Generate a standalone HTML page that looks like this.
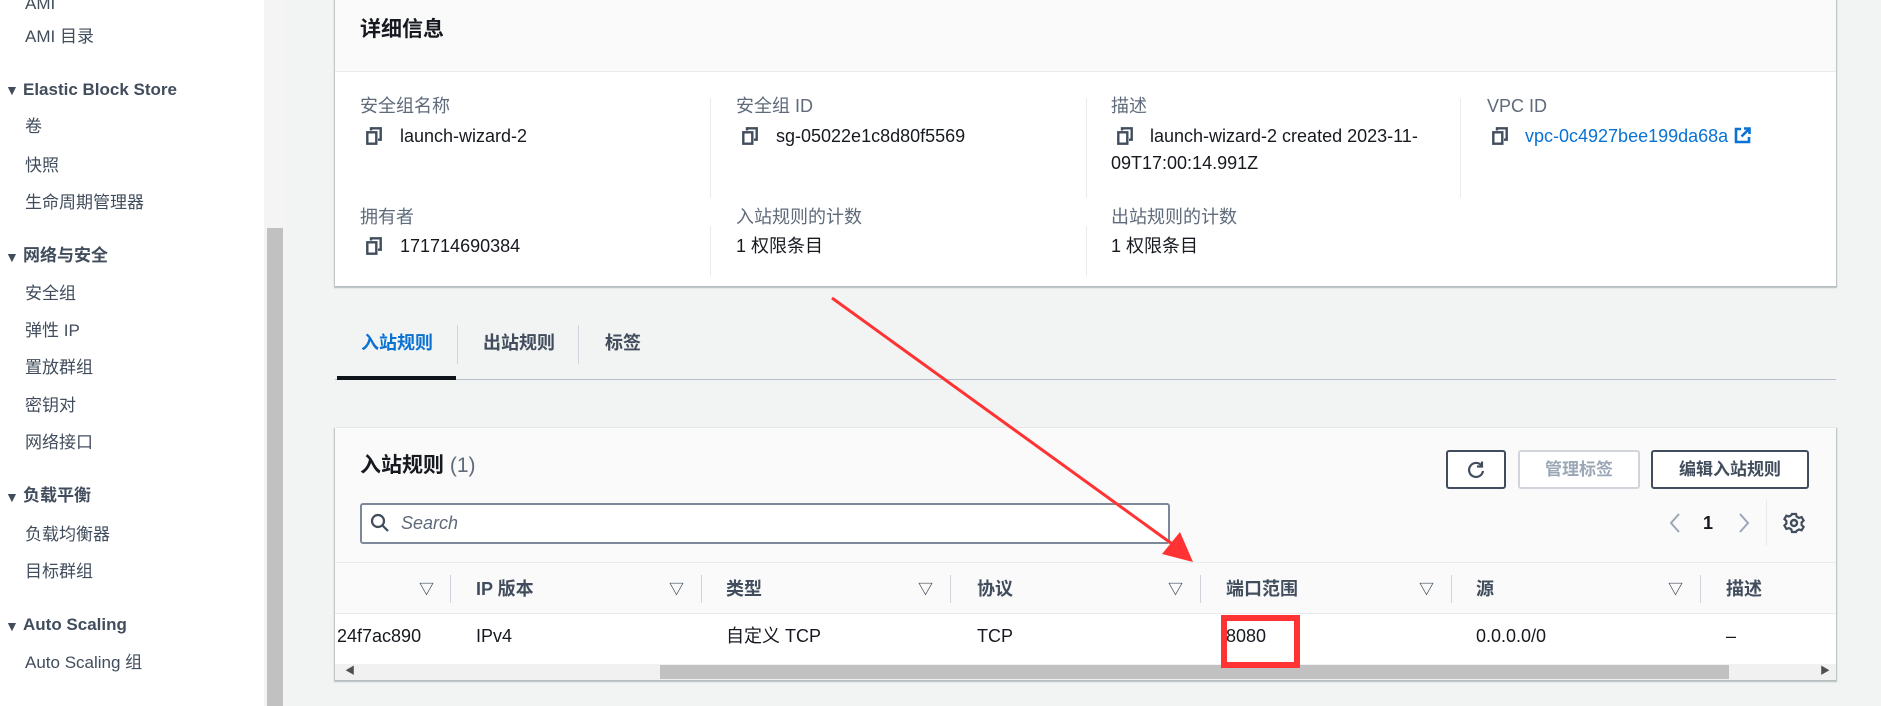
<!DOCTYPE html>
<html><head><meta charset="utf-8"><style>
*{margin:0;padding:0;box-sizing:border-box}
body{width:1881px;height:706px;overflow:hidden;background:#f2f3f3;font-family:"Liberation Sans","Noto Sans CJK SC",sans-serif;color:#16191f;font-size:17px;position:relative}
.a{position:absolute;white-space:nowrap;line-height:20px}
.c{font-size:18px}
.sb{position:absolute;left:0;top:0;width:264px;height:706px;background:#fff}
.track{position:absolute;left:264px;top:0;width:22px;height:706px;background:#f4f4f4}
.thumb{position:absolute;left:267px;top:228px;width:16px;height:478px;background:#c1c1c1}
.nav{left:25px;color:#414d5c}
.navh{left:23px;font-weight:bold;color:#414d5c}
.tri{left:5px;font-size:14px;color:#414d5c}
.panel{position:absolute;background:#fff;box-shadow:0 1px 1px 1px rgba(0,28,36,.25)}
.lbl{color:#5f6b7a}
.vd{position:absolute;width:1px;background:#e9ebed}
.cp{position:absolute;width:16px;height:18px}
.btn{position:absolute;border:2px solid #414d5c;border-radius:3px;background:#fff;font-weight:bold;font-size:17px;text-align:center;color:#414d5c}
.sort{font-size:15px;color:#414d5c;font-weight:bold}
.th{font-weight:bold;color:#414d5c;font-size:18px}
</style></head><body>
<div class="sb"></div>
<div class="track"></div><div class="thumb"></div>
<div class="a nav" style="top:-6px">AMI</div>
<div class="a nav" style="top:27px">AMI 目录</div>
<div class="a tri" style="top:80px">▼</div><div class="a navh" style="top:80px">Elastic Block Store</div>
<div class="a nav" style="top:117px">卷</div>
<div class="a nav" style="top:156px">快照</div>
<div class="a nav" style="top:193px">生命周期管理器</div>
<div class="a tri" style="top:247px">▼</div><div class="a navh" style="top:246px">网络与安全</div>
<div class="a nav" style="top:284px">安全组</div>
<div class="a nav" style="top:321px">弹性 IP</div>
<div class="a nav" style="top:358px">置放群组</div>
<div class="a nav" style="top:396px">密钥对</div>
<div class="a nav" style="top:433px">网络接口</div>
<div class="a tri" style="top:487px">▼</div><div class="a navh" style="top:486px">负载平衡</div>
<div class="a nav" style="top:525px">负载均衡器</div>
<div class="a nav" style="top:562px">目标群组</div>
<div class="a tri" style="top:616px">▼</div><div class="a navh" style="top:615px">Auto Scaling</div>
<div class="a nav" style="top:653px">Auto Scaling 组</div>

<div class="panel" style="left:335px;top:-4px;width:1501px;height:290px">
<div style="position:absolute;left:0;top:0;width:100%;height:76px;background:#fafafa;border-bottom:1px solid #e9ebed"></div>
</div>
<div class="a" style="left:360px;top:18px;font-size:21px;font-weight:bold;line-height:24px">详细信息</div>
<div class="vd" style="left:710px;top:98px;height:100px"></div>
<div class="vd" style="left:1086px;top:98px;height:100px"></div>
<div class="vd" style="left:1460px;top:98px;height:100px"></div>
<div class="vd" style="left:710px;top:226px;height:50px"></div>
<div class="vd" style="left:1086px;top:226px;height:50px"></div>
<div class="a lbl c" style="left:360px;top:96px">安全组名称</div>
<div class="a lbl c" style="left:736px;top:96px">安全组 ID</div>
<div class="a lbl c" style="left:1111px;top:96px">描述</div>
<div class="a lbl c" style="left:1487px;top:96px">VPC ID</div>
<svg class="cp" style="left:366px;top:127px" viewBox="0 0 16 18"><rect x="1.3" y="5.3" width="9" height="11.4" fill="none" stroke="#414d5c" stroke-width="2.4"/><path d="M5 3.5V1.3h9.7v11.4H12" fill="none" stroke="#414d5c" stroke-width="2.4"/></svg>
<div class="a c" style="left:400px;top:126px">launch-wizard-2</div>
<svg class="cp" style="left:742px;top:127px" viewBox="0 0 16 18"><rect x="1.3" y="5.3" width="9" height="11.4" fill="none" stroke="#414d5c" stroke-width="2.4"/><path d="M5 3.5V1.3h9.7v11.4H12" fill="none" stroke="#414d5c" stroke-width="2.4"/></svg>
<div class="a c" style="left:776px;top:126px">sg-05022e1c8d80f5569</div>
<svg class="cp" style="left:1117px;top:127px" viewBox="0 0 16 18"><rect x="1.3" y="5.3" width="9" height="11.4" fill="none" stroke="#414d5c" stroke-width="2.4"/><path d="M5 3.5V1.3h9.7v11.4H12" fill="none" stroke="#414d5c" stroke-width="2.4"/></svg>
<div class="a c" style="left:1150px;top:126px">launch-wizard-2 created 2023-11-</div>
<div class="a c" style="left:1111px;top:153px">09T17:00:14.991Z</div>
<svg class="cp" style="left:1492px;top:127px" viewBox="0 0 16 18"><rect x="1.3" y="5.3" width="9" height="11.4" fill="none" stroke="#414d5c" stroke-width="2.4"/><path d="M5 3.5V1.3h9.7v11.4H12" fill="none" stroke="#414d5c" stroke-width="2.4"/></svg>
<div class="a c" style="left:1525px;top:126px;color:#0972d3">vpc-0c4927bee199da68a</div>
<svg style="position:absolute;left:1734px;top:127px" width="17" height="17" viewBox="0 0 17 17"><path d="M7 2H2v13h13v-5" fill="none" stroke="#0972d3" stroke-width="2.6"/><path d="M10 1.5h5.5V7M15.5 1.5L7.5 9.5" fill="none" stroke="#0972d3" stroke-width="2.6"/></svg>
<div class="a lbl c" style="left:360px;top:207px">拥有者</div>
<div class="a lbl c" style="left:736px;top:207px">入站规则的计数</div>
<div class="a lbl c" style="left:1111px;top:207px">出站规则的计数</div>
<svg class="cp" style="left:366px;top:237px" viewBox="0 0 16 18"><rect x="1.3" y="5.3" width="9" height="11.4" fill="none" stroke="#414d5c" stroke-width="2.4"/><path d="M5 3.5V1.3h9.7v11.4H12" fill="none" stroke="#414d5c" stroke-width="2.4"/></svg>
<div class="a c" style="left:400px;top:236px">171714690384</div>
<div class="a c" style="left:736px;top:236px">1 权限条目</div>
<div class="a c" style="left:1111px;top:236px">1 权限条目</div>

<div class="a c" style="left:361px;top:333px;font-weight:bold;color:#0972d3">入站规则</div>
<div class="a c" style="left:483px;top:333px;font-weight:bold;color:#414d5c">出站规则</div>
<div class="a c" style="left:605px;top:333px;font-weight:bold;color:#414d5c">标签</div>
<div class="vd" style="left:457px;top:325px;height:39px;background:#d1d5db"></div>
<div class="vd" style="left:578px;top:325px;height:39px;background:#d1d5db"></div>
<div style="position:absolute;left:335px;top:379px;width:1501px;height:1px;background:#b6bec9"></div>
<div style="position:absolute;left:337px;top:376px;width:119px;height:4px;background:#0f141a"></div>

<div class="panel" style="left:335px;top:428px;width:1501px;height:252px;background:#fafafa">
<div style="position:absolute;left:0;top:134px;width:100%;height:1px;background:#e9ebed"></div>
<div style="position:absolute;left:0;top:185px;width:100%;height:51px;background:#fff;border-top:1px solid #e9ebed"></div>
<div style="position:absolute;left:0;top:236px;width:100%;height:16px;background:#f1f1f1"></div>
<div style="position:absolute;left:325px;top:237px;width:1069px;height:14px;background:#c1c1c1"></div>
</div>
<div class="a" style="left:345px;top:666px;font-size:10px;line-height:12px;color:#505050">◀</div>
<div class="a" style="left:1820px;top:666px;font-size:10px;line-height:12px;color:#505050">▶</div>
<div class="a" style="left:360px;top:454px;font-size:21px;font-weight:bold;line-height:24px">入站规则 <span style="font-weight:normal;color:#5f6b7a">(1)</span></div>
<div class="btn" style="left:1446px;top:450px;width:60px;height:39px"><svg style="margin-top:8px" width="20" height="20" viewBox="0 0 20 20"><path d="M15.5 5.5A7 7 0 1 0 17 11" fill="none" stroke="#414d5c" stroke-width="2.2"/><path d="M16 1.5v5h-5" fill="none" stroke="#414d5c" stroke-width="2.2"/></svg></div>
<div class="btn" style="left:1518px;top:450px;width:122px;height:39px;border-color:#d1d5db;color:#9ba7b6;line-height:35px">管理标签</div>
<div class="btn" style="left:1651px;top:450px;width:158px;height:39px;line-height:35px">编辑入站规则</div>
<div style="position:absolute;left:360px;top:503px;width:810px;height:41px;border:2px solid #7d8998;border-radius:3px;background:#fff"></div>
<svg style="position:absolute;left:370px;top:513px" width="20" height="20" viewBox="0 0 20 20"><circle cx="8" cy="8" r="6" fill="none" stroke="#414d5c" stroke-width="2.2"/><path d="M12.5 12.5L18 18" stroke="#414d5c" stroke-width="2.2"/></svg>
<div class="a c" style="left:401px;top:513px;font-style:italic;color:#5f6b7a">Search</div>
<svg style="position:absolute;left:1668px;top:512px" width="14" height="22" viewBox="0 0 14 22"><path d="M11 2L3 11l8 9" fill="none" stroke="#9ba7b6" stroke-width="2"/></svg>
<div class="a c" style="left:1703px;top:513px;font-weight:bold">1</div>
<svg style="position:absolute;left:1737px;top:512px" width="14" height="22" viewBox="0 0 14 22"><path d="M3 2l8 9-8 9" fill="none" stroke="#9ba7b6" stroke-width="2"/></svg>
<div class="vd" style="left:1766px;top:500px;height:46px"></div>
<svg style="position:absolute;left:1783px;top:512px" width="22" height="22" viewBox="0 0 22 22"><circle cx="11" cy="11" r="3" fill="none" stroke="#414d5c" stroke-width="2.4"/><path d="M9 2h4l.7 2.6 2.3 1.3 2.6-.8 2 3.4-2 1.9v2.6l2 1.9-2 3.4-2.6-.8-2.3 1.3L13 20H9l-.7-2.6L6 16.1l-2.6.8-2-3.4 2-1.9V9L1.4 7.1l2-3.4 2.6.8 2.3-1.3z" fill="none" stroke="#414d5c" stroke-width="2.2"/></svg>

<div class="a sort" style="left:419px;top:580px">▽</div>
<div class="vd" style="left:450px;top:575px;height:28px;background:#d1d5db"></div>
<div class="a th" style="left:476px;top:579px">IP 版本</div>
<div class="a sort" style="left:669px;top:580px">▽</div>
<div class="vd" style="left:701px;top:575px;height:28px;background:#d1d5db"></div>
<div class="a th" style="left:726px;top:579px">类型</div>
<div class="a sort" style="left:918px;top:580px">▽</div>
<div class="vd" style="left:950px;top:575px;height:28px;background:#d1d5db"></div>
<div class="a th" style="left:977px;top:579px">协议</div>
<div class="a sort" style="left:1168px;top:580px">▽</div>
<div class="vd" style="left:1200px;top:575px;height:28px;background:#d1d5db"></div>
<div class="a th" style="left:1226px;top:579px">端口范围</div>
<div class="a sort" style="left:1419px;top:580px">▽</div>
<div class="vd" style="left:1451px;top:575px;height:28px;background:#d1d5db"></div>
<div class="a th" style="left:1476px;top:579px">源</div>
<div class="a sort" style="left:1668px;top:580px">▽</div>
<div class="vd" style="left:1700px;top:575px;height:28px;background:#d1d5db"></div>
<div class="a th" style="left:1726px;top:579px">描述</div>
<div class="a c" style="left:337px;top:626px">24f7ac890</div>
<div class="a c" style="left:476px;top:626px">IPv4</div>
<div class="a c" style="left:726px;top:626px">自定义 TCP</div>
<div class="a c" style="left:977px;top:626px">TCP</div>
<div class="a c" style="left:1226px;top:626px">8080</div>
<div class="a c" style="left:1476px;top:626px">0.0.0.0/0</div>
<div class="a c" style="left:1726px;top:626px">–</div>
<div style="position:absolute;left:1221px;top:615px;width:79px;height:53px;border:6px solid #ff3333"></div>

<svg style="position:absolute;left:0;top:0" width="1881" height="706"><line x1="832" y1="298" x2="1175" y2="546" stroke="#ff3333" stroke-width="3"/><polygon points="1193,562 1162,554 1180,532" fill="#ff3333"/></svg>
</body></html>
